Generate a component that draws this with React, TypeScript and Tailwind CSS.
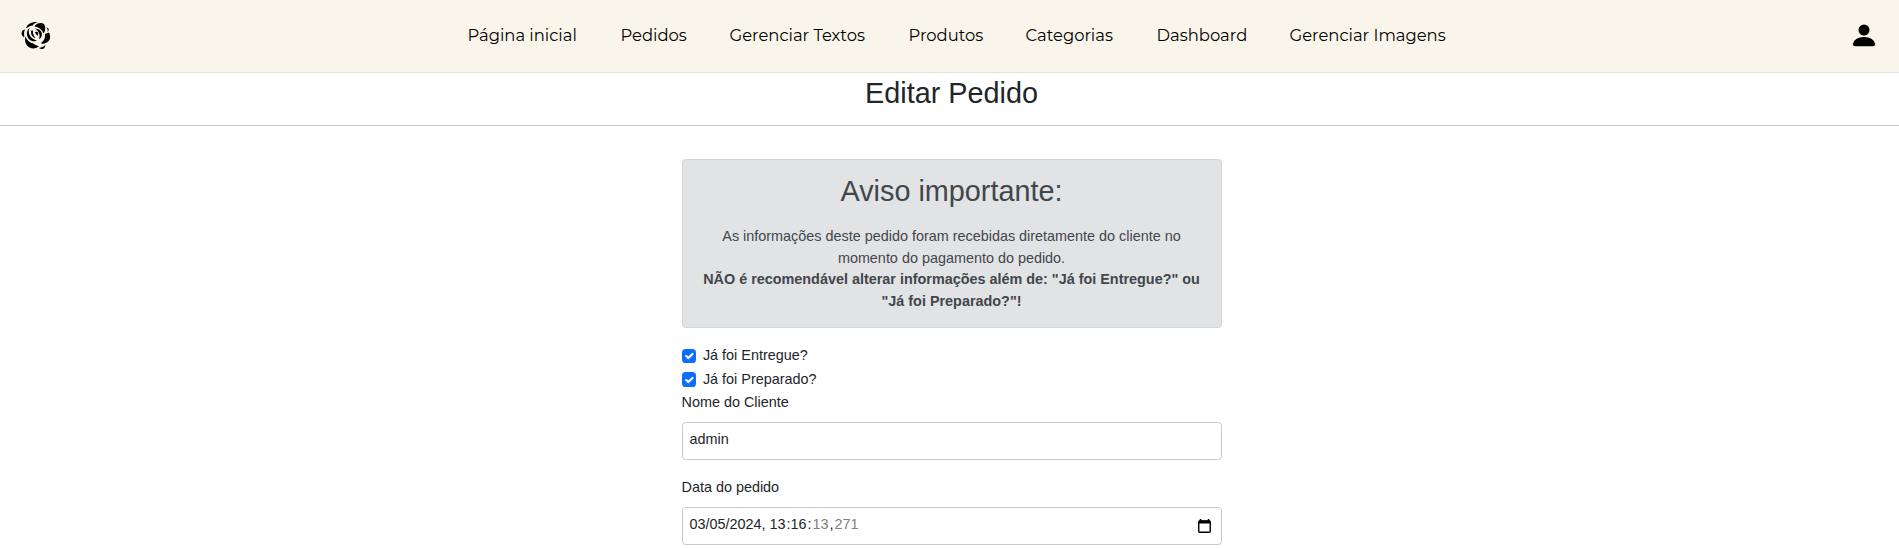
import React from "react";

const links = [
  { label: "Página inicial", style: "w-[153px]" },
  { label: "Pedidos", style: "w-[109px]" },
  { label: "Gerenciar Textos", style: "w-[179px]" },
  { label: "Produtos", style: "w-[117px]" },
  { label: "Categorias", style: "w-[131px]" },
  { label: "Dashboard", style: "w-[133px]" },
  { label: "Gerenciar Imagens", style: "w-[160px]" },
];

function Rose() {
  return (
    <svg className="ml-[21px] size-[31px] shrink-0" viewBox="0 0 31 31">
      <path d="M5 7.5C6 2.5 12 .2 17 1.2C13 2 12 3.5 12 4.5C9 4.500 7 6 5 7.500Z" />
      <path d="M13.5 5.5C15 2 20 .8 23 3C25 6 24.5 10 22.500 12.500C21 8.500 18 6 13.5 5.5Z" />
      <path d="M4 8.500C-.5 9-.5 15.500 3.500 16C2.800 13.500 2.800 11 4 8.500Z" />
      <path d="M25.500 6.500C28 6.500 28.500 9.500 26.500 11C27 9 26.500 8 25.500 6.500Z" />
      <path d="M24 13L28 11.500C30.500 16 29 21 23.500 22.500C21.500 23 20 22.500 20 22C23 20 24.500 17 24 13Z" />
      <path d="M4.500 15.500C6 19.500 9 22 12.500 22.500C14 24 16 25 18 25C15 28.500 9 28 6 24.500C4 22 3.500 18.500 4.500 15.500Z" />
      <path d="M18 27C20.500 26.500 22.500 25.500 24.500 24C24 28.500 20 29 18 27Z" />
      <path d="M8.500 7C4.500 10 5 18 11 20C13 20.700 15 20 16 19.500C12 18.500 9 16 8 12.500C7.500 10 8 9 8.500 7Z" />
      <path d="M14 7.500C18.500 7.500 21.500 10.500 20.800 14.500C20.500 16.500 19 17.800 18 18C19.500 14 18 10 14 7.500Z" />
      <path d="M10.200 9.500C9.500 14 11.500 16.500 14.500 17C12.500 14.500 11.500 12.500 12 9.500Z" />
      <path d="M14 11C17 9.800 18.300 12 16.300 15C16 13.500 14.500 13.500 14 11Z" />
    </svg>
  );
}

function Check({ label }: { label: string }) {
  return (
    <label className="flex h-[23.5px] items-start">
      <span className="mt-[3.6px] flex size-[14.4px] items-center justify-center rounded-[3.6px] bg-[#0d6efd]">
        <svg viewBox="0 0 20 20" className="size-[14px]" fill="none" stroke="#fff" strokeWidth="3" strokeLinecap="round" strokeLinejoin="round">
          <path d="m6 10 3 3 6-6" />
        </svg>
      </span>
      <span className="ml-[7px]">{label}</span>
    </label>
  );
}

export default function App() {
  return (
    <div className="h-[548px] overflow-hidden bg-white font-['Liberation_Sans',Arial,sans-serif] text-[14.4px] leading-[21.6px] text-[#212529]">
      <header className="flex h-[73px] items-center border-b border-[#dee2e6] bg-[#faf5ea]">
        <Rose />
        <nav className="-mt-[3px] ml-[415.5px] flex font-['Montserrat','Inter',sans-serif] text-[16.4px] leading-6 text-black">
          {links.map((l) => (
            <a key={l.label} className={`block shrink-0 whitespace-nowrap ${l.style}`}>{l.label}</a>
          ))}
        </nav>
        <svg className="mt-[-2px] mr-[24px] ml-auto h-[23px] w-[22px]" viewBox="0 0 22 23">
          <circle cx="11" cy="6" r="5.5" />
          <path d="M0 20.5C0 16 5 13 11 13S22 16 22 20.5Q22 22.3 20 22.3H2Q0 22.3 0 20.5Z" />
        </svg>
      </header>
      <h1 className="h-[53px] border-b border-[#c8c9ca] pt-[2.6px] pl-[4px] text-center text-[28.8px] leading-[34.56px]">Editar Pedido</h1>
      <main className="mx-auto w-[540px] translate-x-[2px] pt-[33px]">
        <section className="h-[169px] rounded-[3.6px] border border-[#d3d6d8] bg-[#e2e3e5] px-[14.4px] pt-[14.4px] text-center text-[#41464b]">
          <h2 className="mb-[17px] text-[28.8px] leading-[34.56px]">Aviso importante:</h2>
          <p>As informações deste pedido foram recebidas diretamente do cliente no momento do pagamento do pedido.</p>
          <p className="font-bold">NÃO é recomendável alterar informações além de: "Já foi Entregue?" ou "Já foi Preparado?"!</p>
        </section>
        <div className="pt-[17.4px]">
          <Check label="Já foi Entregue?" />
          <Check label="Já foi Preparado?" />
        </div>
        <p className="mb-[7.7px]">Nome do Cliente</p>
        <div className="flex h-[38px] items-center rounded-[3.6px] border border-[#c8c9ca] px-[7px] pb-[1px]">admin</div>
        <p className="mt-[17.4px] mb-[8px]">Data do pedido</p>
        <div className="flex h-[38px] items-center justify-between rounded-[3.6px] border border-[#c8c9ca] pr-[10px] pl-[7px]">
          <span className="pb-[1px]">
            03/05/2024, <span className="mr-px">13</span>:<span className="mr-px">16</span>:
            <span className="mx-px text-[#808080]">13</span>,<span className="ml-px text-[#808080]">271</span>
          </span>
          <svg className="h-[14px] w-[13px]" viewBox="0 0 13 14">
            <path d="M2.5 0V2M10.5 0V2" stroke="#000" strokeWidth="1.5" />
            <rect x=".75" y="2" width="11.5" height="11.2" rx="1" fill="none" stroke="#000" strokeWidth="1.4" />
            <path d="M1 1.5H12V4.5H1Z" />
          </svg>
        </div>
      </main>
    </div>
  );
}
